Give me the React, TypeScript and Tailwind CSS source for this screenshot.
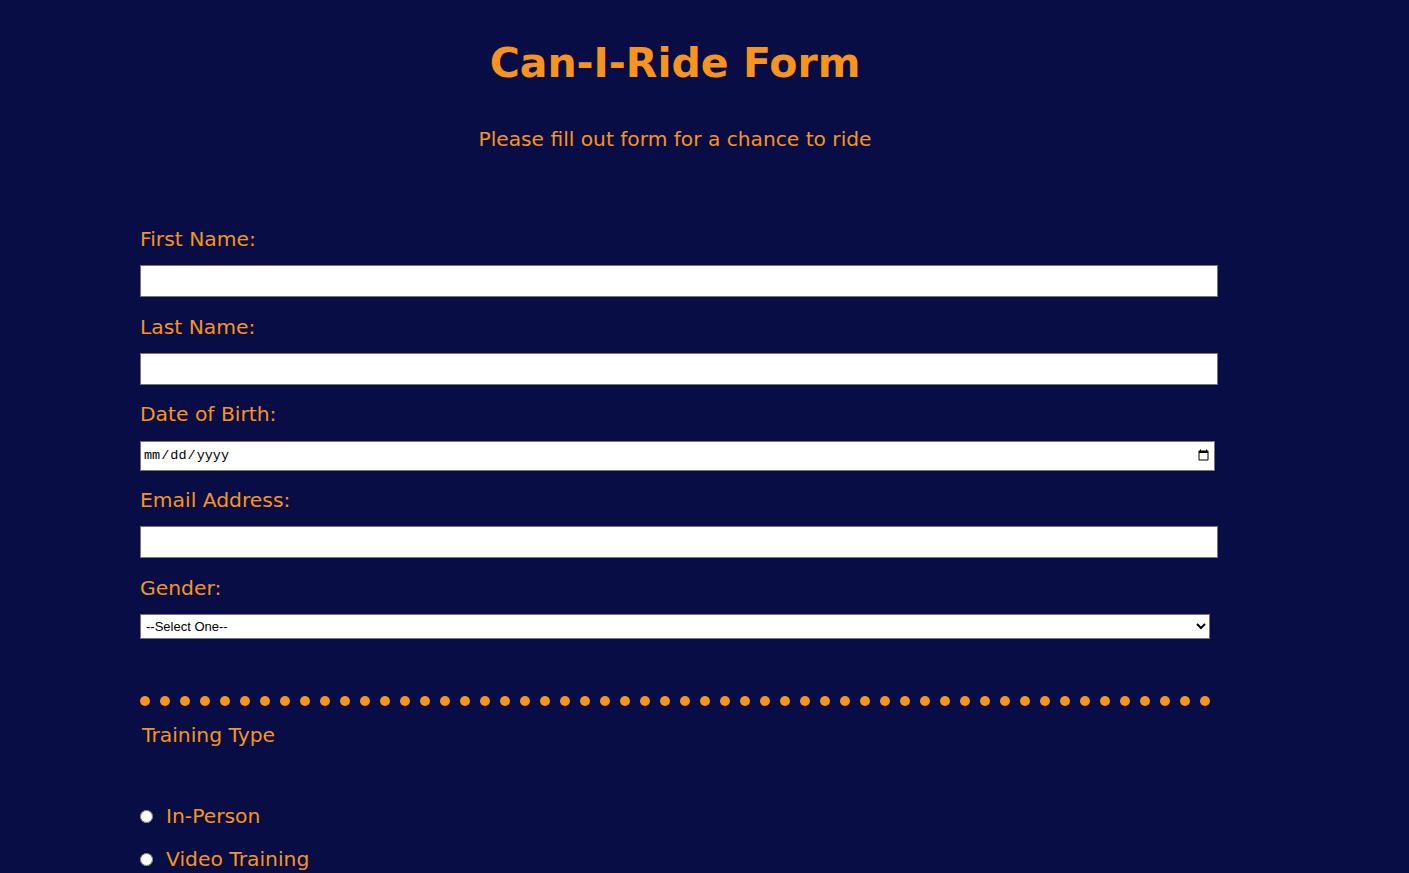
import React from "react";

const font = { fontFamily: '"DejaVu Sans", Verdana, sans-serif' };

const Label = ({ children }: { children: React.ReactNode }) => (
  <label className="block text-[20.3px] leading-[24px] text-[#f7941d]">{children}</label>
);

const App = () => {
  const dots = Array.from({ length: 54 });

  return (
    <div className="min-h-[873px] bg-[#080e45] pb-10" style={font}>
      <div className="ml-[140px] w-[1078px]">
        <div className="w-[1070px] pt-[37px] text-center">
          <h1 className="text-[41px] font-bold leading-[52px] text-[#f7941d]">Can-I-Ride Form</h1>
          <p className="mt-[38px] text-[20.2px] leading-[24px] text-[#f7941d]">
            Please fill out form for a chance to ride
          </p>
        </div>

        <form className="mt-[76px]">
          <Label>First Name:</Label>
          <input
            type="text"
            className="mt-[14px] block h-[32px] w-[1078px] border border-[#767676] bg-white"
          />

          <div className="mt-[18px]">
            <Label>Last Name:</Label>
          </div>
          <input
            type="text"
            className="mt-[14px] block h-[32px] w-[1078px] border border-[#767676] bg-white"
          />

          <div className="mt-[17px]">
            <Label>Date of Birth:</Label>
          </div>
          <input
            type="date"
            className="mt-[15px] block h-[30px] w-[1075px] border border-[#767676] bg-white px-[2px] text-[13.5px] text-black"
            style={{ fontFamily: '"Liberation Mono", "Courier New", monospace' }}
          />

          <div className="mt-[17px]">
            <Label>Email Address:</Label>
          </div>
          <input
            type="email"
            className="mt-[14px] block h-[32px] w-[1078px] border border-[#767676] bg-white"
          />

          <div className="mt-[18px]">
            <Label>Gender:</Label>
          </div>
          <select
            className="mt-[14px] block h-[25px] w-[1070px] border border-[#767676] bg-white px-[1px] text-[13px] text-black"
            style={{ fontFamily: '"Liberation Sans", Arial, sans-serif' }}
            defaultValue=""
          >
            <option value="">--Select One--</option>
            <option value="m">Male</option>
            <option value="f">Female</option>
          </select>

          <div className="mt-[57px] flex w-[1070px] justify-between">
            {dots.map((_, i) => (
              <span key={i} className="block h-[10px] w-[10px] rounded-full bg-[#f7941d]" />
            ))}
          </div>

          <div className="mt-[17px] pl-[2px]">
            <Label>Training Type</Label>
          </div>

          <div className="mt-[57px] flex items-center gap-[13px]">
            <input type="radio" name="training" className="m-0 h-[13px] w-[13px]" />
            <span className="text-[20.3px] leading-[24px] text-[#f7941d]">In-Person</span>
          </div>
          <div className="mt-[19px] flex items-center gap-[13px]">
            <input type="radio" name="training" className="m-0 h-[13px] w-[13px]" />
            <span className="text-[20.3px] leading-[24px] text-[#f7941d]">Video Training</span>
          </div>
        </form>
      </div>
    </div>
  );
};

export default App;
